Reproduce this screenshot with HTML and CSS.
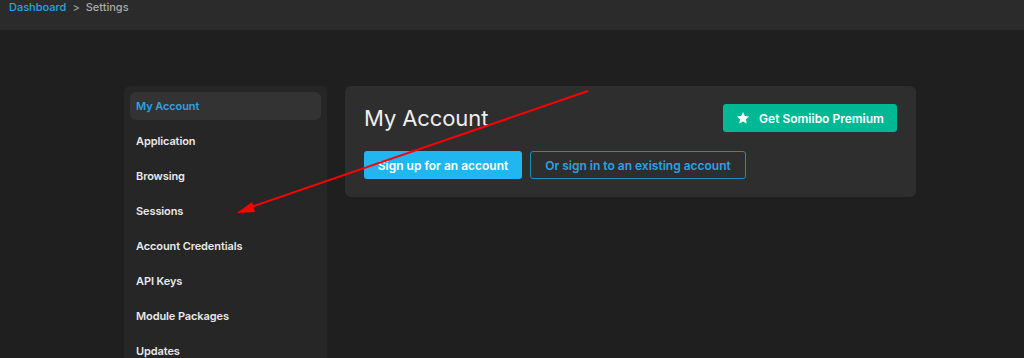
FILE: index.html
```html
<!DOCTYPE html>
<html lang="en">
<head>
    <meta charset="UTF-8">
    <meta name="viewport" content="width=device-width, initial-scale=1.0">
    <title>Settings</title>
    <link rel="stylesheet" href="styles.css">
</head>
<body>
    <div class="topbar">
        <a class="crumb-link" href="#">Dashboard</a>
        <span class="crumb-sep">&gt;</span>
        <span class="crumb-current">Settings</span>
    </div>

    <div class="settings">
        <nav class="side-nav">
            <a class="nav-item active" href="#">My Account</a>
            <a class="nav-item" href="#">Application</a>
            <a class="nav-item" href="#">Browsing</a>
            <a class="nav-item" href="#">Sessions</a>
            <a class="nav-item" href="#">Account Credentials</a>
            <a class="nav-item" href="#">API Keys</a>
            <a class="nav-item" href="#">Module Packages</a>
            <a class="nav-item" href="#">Updates</a>
        </nav>

        <div class="account-card">
            <div class="card-head">
                <h1 class="card-title">My Account</h1>
                <button class="premium-button">
                    <svg class="star" viewBox="0 0 24 24" width="14" height="14">
                        <path d="M12 1.8l3.1 6.6 7.2.9-5.3 5 1.4 7.1L12 17.9l-6.4 3.5 1.4-7.1-5.3-5 7.2-.9z" fill="#fff"/>
                    </svg>
                    Get Somiibo Premium
                </button>
            </div>
            <div class="card-actions">
                <button class="signup-button">Sign up for an account</button>
                <button class="signin-button">Or sign in to an existing account</button>
            </div>
        </div>
    </div>

    <!-- annotation arrow drawn over the screenshot -->
    <svg class="annotation" width="1024" height="358" viewBox="0 0 1024 358">
        <line x1="588" y1="91" x2="248" y2="208" stroke="#f00" stroke-width="2"/>
        <polygon points="237,213 252,202 255,212" fill="#f00"/>
    </svg>
</body>
</html>
```

FILE: styles.css
```css
body {
    font-family: Inter, "Noto Sans", sans-serif;
    background-color: #1f1f1f;
    color: #eee;
    margin: 0;
    height: 358px;
    overflow: hidden;
    position: relative;
}
.topbar {
    height: 30px;
    background: #2b2b2b;
    padding: 0 9px;
    font-size: 11px;
    font-weight: 500;
    line-height: 15px;
    display: flex;
    gap: 6px;
    align-items: flex-start;
}
.crumb-link {
    color: #2ba3e2;
    text-decoration: none;
}
.crumb-sep {
    color: #999;
}
.crumb-current {
    color: #aaa;
}
.settings {
    display: flex;
    align-items: flex-start;
    gap: 18px;
    padding: 56px 0 0 124px;
}
.side-nav {
    width: 191px;
    background: #262626;
    border-radius: 6px;
    padding: 6px;
    display: flex;
    flex-direction: column;
    gap: 7px;
}
.nav-item {
    height: 28px;
    line-height: 28px;
    padding: 0 6px;
    border-radius: 6px;
    color: #e8e8e8;
    font-size: 11px;
    font-weight: 600;
    letter-spacing: -0.1px;
    text-decoration: none;
}
.nav-item.active {
    background: #333;
    color: #2ba3e2;
}
.account-card {
    width: 533px;
    background: #2e2e2e;
    border-radius: 6px;
    padding: 18px 19px;
}
.card-head {
    display: flex;
    justify-content: space-between;
    align-items: flex-start;
}
.card-title {
    margin: 0;
    font-size: 22px;
    font-weight: 400;
    line-height: 29px;
    letter-spacing: -0.1px;
    color: #eee;
}
.premium-button {
    height: 28px;
    width: 174px;
    display: flex;
    align-items: center;
    justify-content: center;
    gap: 9px;
    background: #00b894;
    color: #fff;
    border: none;
    border-radius: 3px;
    font-family: inherit;
    font-size: 12px;
    font-weight: 600;
}
.card-actions {
    display: flex;
    gap: 8px;
    margin-top: 18px;
}
.signup-button,
.signin-button {
    height: 28px;
    padding: 0 13px;
    border-radius: 3px;
    font-family: inherit;
    font-size: 12px;
    font-weight: 600;
}
.signup-button {
    width: 158px;
    background: #20b6f0;
    color: #fff;
    border: none;
}
.signin-button {
    width: 216px;
    background: transparent;
    color: #2ba3e2;
    border: 1px solid #1c8cbf;
}
.annotation {
    position: absolute;
    left: 0;
    top: 0;
    pointer-events: none;
}
```
